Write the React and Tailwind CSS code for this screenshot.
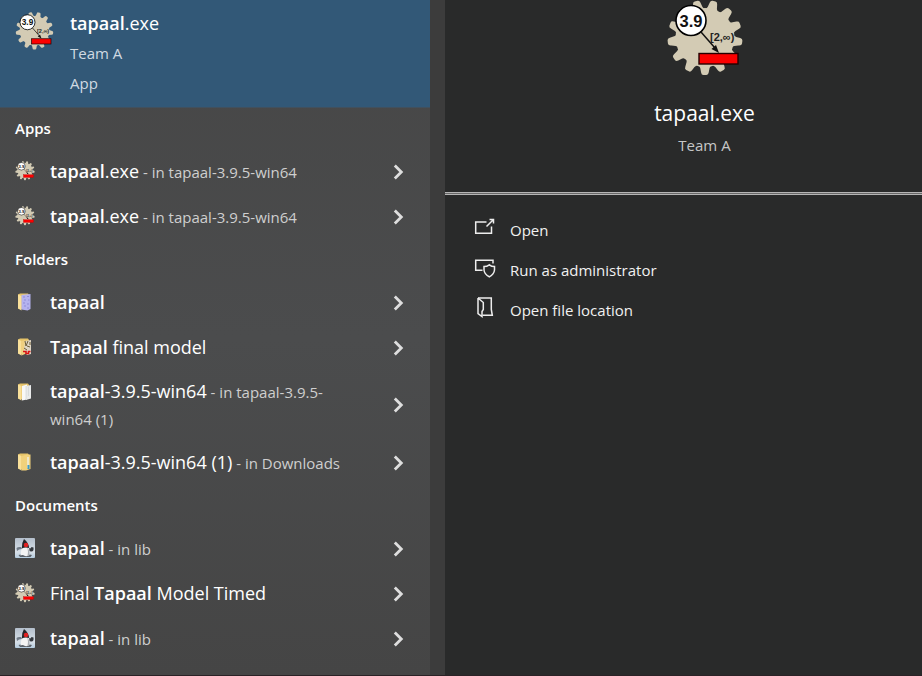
import React from "react";

const TEETH = Array.from({ length: 13 }, (_, i) => (i * 360) / 13 + 14);

function GearIcon({ className, small = false }) {
  return (
    <svg viewBox="0 0 78 78" className={className} aria-hidden="true">
      <g fill="#d3cbb4" transform="translate(39 37.500)">
        <circle r="29.500" />
        {TEETH.map((angle) => (
          <path key={angle} d="M-6.500-27Q-4.200-30-3.800-35Q-3.500-37.500-1.500-37.500H1.500Q3.500-37.500 3.800-35Q4.200-30 6.500-27Z" transform={`rotate(${angle})`} />
        ))}
      </g>
      <circle cx="25" cy="20.500" r="15" fill="#fff" stroke="#000" strokeWidth={small ? 2 : 1.6} />
      <path d="M35 32L49 48" stroke="#111" strokeWidth="1.500" />
      <path d="M53 53L45.500 49L50 45Z" fill="#111" />
      <rect x="33" y="53.500" width="39" height="10.500" fill="#fb0000" stroke={small ? "#c00000" : "#240000"} strokeWidth="1.400" />
      <text x="25" y="26.500" textAnchor="middle" fontSize="16.500" fontWeight="700" fontFamily="Liberation Sans, sans-serif" fill="#111">3.9</text>
      <text x="44" y="41" fontSize="11" fontWeight="700" fontFamily="Liberation Sans, sans-serif" fill="#222">[2,∞)</text>
    </svg>
  );
}

function FolderIcon({ kind }) {
  return (
    <svg viewBox="0 0 20 20" className="h-5 w-5" aria-hidden="true">
      <path d="M3 2.500L5 1.500H13L14 3V17H4L3 16Z" fill="#e6c369" />
      <path d="M3 2.500L6.500 4V18.500L3 16.500Z" fill="#f9e09a" />
      {kind === "blue" && (
        <g>
          <path d="M6.500 3L15.500 2V17L12.500 18.500L6.500 17.500Z" fill="#b4b2ee" />
          <path d="M8 5H10M12 4.500H14M9 8H11M13 8H14.500M8 11H10M12 12H14M9 14H11M12 16H14" stroke="#8f8bd6" />
        </g>
      )}
      {kind === "model" && (
        <g>
          <path d="M6.500 4L10 3V17L6.500 18.500Z" fill="#efd080" />
          <path d="M10 4L16 3V17L12 18L9 14Z" fill="#ded5c5" />
          <path d="M10 4L11 9L13 4M15 5V8M12 9L15 10M9 11L12 13" stroke="#6b5c36" fill="none" />
          <path d="M8 14.500H11V16.500H13.500V14.500H15.500" stroke="#d81414" strokeWidth="1.600" fill="none" />
        </g>
      )}
      {kind === "paper" && (
        <g>
          <path d="M7 4L12 2.500V17.500L7 18.500Z" fill="#f8f8f7" />
          <path d="M11 4L16 3V16.500L11 18Z" fill="#e9eaea" />
          <path d="M11 4V18M13.500 4.500V14" stroke="#cdd0d0" strokeWidth="0.600" />
        </g>
      )}
      {kind === "zip" && (
        <g>
          <path d="M6.500 4L12 2.500H15.500V17L11 18.500H6.500Z" fill="#f1d17b" />
          <path d="M12 5H14V16H12Z" fill="#eee6c8" />
          <path d="M12.500 13H14.500V17H12.500Z" fill="#3a9ac8" />
        </g>
      )}
    </svg>
  );
}

function DukeIcon() {
  return (
    <svg viewBox="0 0 20 20" className="h-5 w-5" aria-hidden="true">
      <defs>
        <linearGradient id="duke-tile" x1="0" y1="0" x2="0" y2="1">
          <stop offset="0" stopColor="#b4bfcc" />
          <stop offset="0.700" stopColor="#d8e0e8" />
          <stop offset="1" stopColor="#b4cce0" />
        </linearGradient>
      </defs>
      <rect width="20" height="20" rx="1" fill="url(#duke-tile)" />
      <path d="M1.500 10Q3 8.500 6 9L7 11L4 11.500L2 13Z" fill="#6f7a86" />
      <path d="M13.500 9.500Q15.500 11.500 16.500 9L18.500 9.500Q19 13.500 16.500 13.500Q14.500 13.500 13 12Z" fill="#33373d" />
      <path d="M3.500 17Q10 15 17 17L15.500 19H5Z" fill="#5b626a" />
      <path d="M8 8Q5.500 12 5.500 17.500Q7.500 16.500 10 18Q12.500 18.500 14.500 17Q15 12 13.500 8Z" fill="#f4f4f4" />
      <path d="M13 10Q15 14 14.500 17L12.500 18Q13.500 14 12.500 10Z" fill="#a9adb3" />
      <path d="M9 1Q6.500 5 6.800 10.500Q10 9 14 10Q14 5 9 1Z" fill="#25272b" />
      <circle cx="11" cy="7" r="2.300" fill="#e02020" />
    </svg>
  );
}

function Chevron() {
  return (
    <svg viewBox="0 0 11 16" className="h-4 w-[11px]" fill="none" stroke="#dedede" strokeWidth="2.800" aria-hidden="true">
      <path d="M1.800 1.500L8.300 8L1.800 14.500" />
    </svg>
  );
}

function ResultRow({ icon, children }) {
  return (
    <li>
      <button type="button" className="flex min-h-[45px] w-full items-center py-2 pl-[15px] pr-[26px] text-left">
        <span className="flex w-[35px] shrink-0 self-start pt-1">{icon}</span>
        <span className="min-w-0 flex-1 pr-9 text-[18px] leading-[27px] text-white">{children}</span>
        <Chevron />
      </button>
    </li>
  );
}

const Match = ({ children }) => <b className="font-semibold">{children}</b>;
const Place = ({ children }) => <span className="text-[15px] leading-none text-[#cfcfcf]"> - in {children}</span>;

function Group({ title, children }) {
  return (
    <section>
      <h2 className="flex h-[41px] items-center px-[15px] text-[15px] font-semibold text-white">{title}</h2>
      <ul>{children}</ul>
    </section>
  );
}

const smallGear = <GearIcon small className="h-5 w-5" />;

function Results() {
  return (
    <main className="bg-gradient-to-b from-[#464646] via-[#4b4c4d] to-[#454545]">
      <button type="button" className="flex h-[108px] w-full items-start border-b border-[#40505e] bg-[#325877] pl-[15px] pt-2 text-left">
        <GearIcon className="mt-1 h-[39px] w-[39px]" />
        <span className="ml-4 flex flex-col text-[15px] leading-[30px] text-[#d0dae2]">
          <span className="text-[18px] text-white"><Match>tapaal</Match>.exe</span>
          <span>Team A</span>
          <span>App</span>
        </span>
      </button>
      <Group title="Apps">
        <ResultRow icon={smallGear}><Match>tapaal</Match>.exe<Place>tapaal-3.9.5-win64</Place></ResultRow>
        <ResultRow icon={smallGear}><Match>tapaal</Match>.exe<Place>tapaal-3.9.5-win64</Place></ResultRow>
      </Group>
      <Group title="Folders">
        <ResultRow icon={<FolderIcon kind="blue" />}><Match>tapaal</Match></ResultRow>
        <ResultRow icon={<FolderIcon kind="model" />}><Match>Tapaal</Match> final model</ResultRow>
        <ResultRow icon={<FolderIcon kind="paper" />}><Match>tapaal</Match>-3.9.5-win64<Place>tapaal-3.9.5-win64 (1)</Place></ResultRow>
        <ResultRow icon={<FolderIcon kind="zip" />}><Match>tapaal</Match>-3.9.5-win64 (1)<Place>Downloads</Place></ResultRow>
      </Group>
      <Group title="Documents">
        <ResultRow icon={<DukeIcon />}><Match>tapaal</Match><Place>lib</Place></ResultRow>
        <ResultRow icon={smallGear}>Final <Match>Tapaal</Match> Model Timed</ResultRow>
        <ResultRow icon={<DukeIcon />}><Match>tapaal</Match><Place>lib</Place></ResultRow>
      </Group>
    </main>
  );
}

function Action({ label, children }) {
  return (
    <li>
      <button type="button" className="flex h-10 w-full items-center pl-[29px] text-left text-[15px] text-[#f1f1f1]">
        <svg viewBox="0 0 22 22" className="mb-1.5 h-[22px] w-[22px]" fill="none" stroke="#ededed" strokeWidth="1.500" aria-hidden="true">{children}</svg>
        <span className="ml-[14px]">{label}</span>
      </button>
    </li>
  );
}

function Details() {
  return (
    <aside className="bg-[#292a2a]">
      <header className="flex h-[192px] flex-col items-center pl-[42px]">
        <GearIcon className="h-[78px] w-[78px]" />
        <h1 className="mt-5 text-[21px] leading-[30px] text-white">tapaal.exe</h1>
        <p className="mt-1 text-[15px] leading-[26px] text-[#c6c6c6]">Team A</p>
      </header>
      <hr className="h-[3px] border-y border-[#b5b5b5] bg-[#686868]" />
      <ul className="pt-[15px]">
        <Action label="Open">
          <path d="M12.500 6H1.700V17.300H17.500V10.500" />
          <path d="M12.500 10.500L19.500 3.500M15.500 3.500H19.500V7.500" />
          <path d="M17 3H20V6Z" fill="#ededed" stroke="none" />
        </Action>
        <Action label="Run as administrator">
          <path d="M8.500 14.300H1.700V4.300H19V7.500" />
          <path d="M15.300 8.800Q17.500 10.500 20.500 10.500V14Q20 18.500 15.300 20.800Q10.500 18.500 10 14V10.500Q13 10.500 15.300 8.800Z" />
        </Action>
        <Action label="Open file location">
          <path d="M4 2H17.300V13.500L18.300 19.300H8.500" />
          <path d="M4 2V17.500L8 20.500V15.500L9.300 13.500V6.500L4 2" />
        </Action>
      </ul>
    </aside>
  );
}

export default function App() {
  return (
    <div className="grid min-h-screen grid-cols-[430fr_15px_477fr] border-b border-[#2b2226] bg-[#3c3c3c] font-['Open_Sans','Noto_Sans',sans-serif]">
      <Results />
      <div />
      <Details />
    </div>
  );
}
